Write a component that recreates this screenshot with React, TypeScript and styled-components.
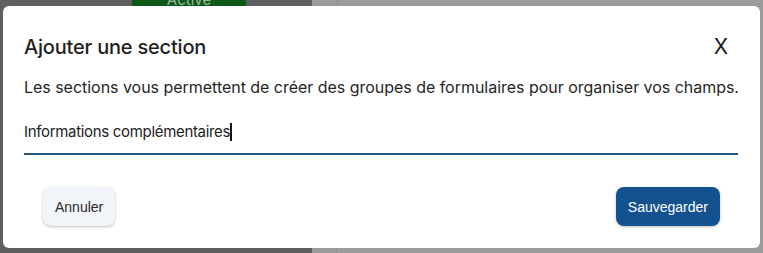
import React from "react";
import styled, { createGlobalStyle } from "styled-components";

const Global = createGlobalStyle`
  html, body {
    margin: 0;
    padding: 0;
    width: 763px;
    height: 253px;
    overflow: hidden;
    font-family: Inter, "Liberation Sans", sans-serif;
  }
  * { box-sizing: border-box; }
`;

const Page = styled.div`
  position: relative;
  display: flex;
  width: 763px;
  height: 253px;
  overflow: hidden;
`;

const SidePane = styled.div`
  width: 312px;
  background: #5f5f5f;
`;

const Badge = styled.div`
  margin-left: 132px;
  width: 114px;
  height: 6px;
  background: #0e5a18;
  overflow: hidden;
  color: #9fb5a2;
  font-size: 15px;
  line-height: 0;
  text-align: center;
`;

const MainPane = styled.div`
  flex: 1;
  background: #9b9b9b;
  padding-left: 24px;
`;

const Divider = styled.div`
  width: 1px;
  height: 100%;
  background: #929292;
`;

const Dialog = styled.div`
  position: absolute;
  top: 6px;
  left: 3px;
  right: 3px;
  height: 242px;
  background: #fff;
  border-radius: 6px;
  padding: 29px 22px 0 21px;
  display: flex;
  flex-direction: column;
`;

const Header = styled.div`
  display: flex;
  justify-content: space-between;
  align-items: center;
`;

const Title = styled.h2`
  margin: 0;
  font-size: 20px;
  line-height: 24px;
  font-weight: 500;
  color: #1f1f1f;
  letter-spacing: -0.2px;
`;

const Close = styled.button`
  border: none;
  background: none;
  padding: 0;
  margin-right: 10px;
  font-family: Inter, "Liberation Sans", sans-serif;
  font-size: 21px;
  font-weight: 400;
  line-height: 24px;
  color: #1a1a1a;
  cursor: pointer;
`;

const Description = styled.p`
  margin: 16px 0 0;
  font-size: 16px;
  line-height: 24px;
  color: #262626;
  white-space: nowrap;
  letter-spacing: -0.03px;
`;

const Field = styled.div`
  margin-top: 23px;
  border-bottom: 2px solid #255783;
  padding-bottom: 11px;
  display: flex;
  align-items: center;
`;

const Value = styled.span`
  font-size: 15px;
  line-height: 20px;
  color: #222;
  letter-spacing: -0.32px;
`;

const Caret = styled.span`
  display: inline-block;
  width: 2px;
  height: 18px;
  background: #111;
`;

const Footer = styled.div`
  margin-top: 32px;
  padding: 0 18px 0 19px;
  display: flex;
  justify-content: space-between;
`;

const Button = styled.button<{ $primary?: boolean }>`
  height: 39px;
  padding: 0 12px;
  border: none;
  border-radius: 8px;
  font-family: "Liberation Sans", Arial, sans-serif;
  font-size: 14px;
  background: ${(p) => (p.$primary ? "#14528f" : "#f1f4f9")};
  color: ${(p) => (p.$primary ? "#fff" : "#2a2a2a")};
  box-shadow: 0 1px 3px rgba(0, 0, 0, 0.25);
  cursor: pointer;
`;

export default function App() {
  return (
    <>
      <Global />
      <Page>
        <SidePane>
          <Badge>Active</Badge>
        </SidePane>
        <MainPane>
          <Divider />
        </MainPane>
        <Dialog>
          <Header>
            <Title>Ajouter une section</Title>
            <Close>X</Close>
          </Header>
          <Description>
            Les sections vous permettent de créer des groupes de formulaires
            pour organiser vos champs.
          </Description>
          <Field>
            <Value>Informations complémentaires</Value>
            <Caret />
          </Field>
          <Footer>
            <Button>Annuler</Button>
            <Button $primary>Sauvegarder</Button>
          </Footer>
        </Dialog>
      </Page>
    </>
  );
}
